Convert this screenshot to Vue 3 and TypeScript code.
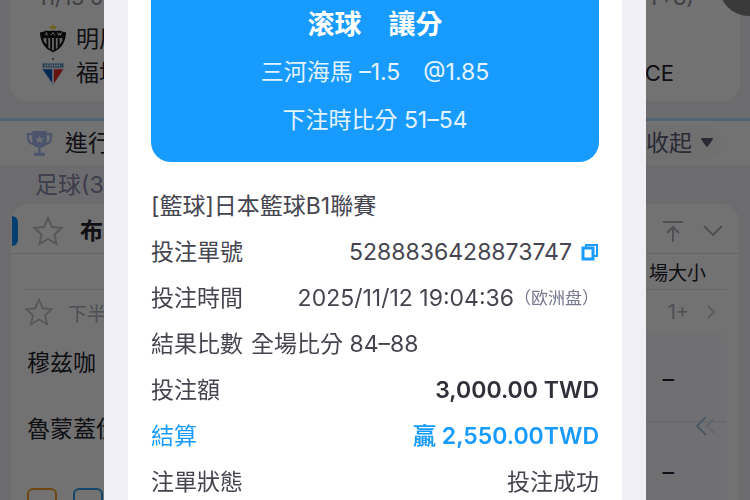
<script setup lang="ts">
interface Detail {
  label: string
  value: string
  note?: string
  kind?: 'amount' | 'win' | 'inline'
  copy?: boolean
}

const details: Detail[] = [
  { label: '投注單號', value: '5288836428873747', copy: true },
  { label: '投注時間', value: '2025/11/12 19:04:36', note: '（欧洲盘）' },
  { label: '結果比數', value: '全場比分 84–88', kind: 'inline' },
  { label: '投注額', value: '3,000.00 TWD', kind: 'amount' },
  { label: '結算', value: '贏 2,550.00TWD', kind: 'win' },
  { label: '注單狀態', value: '投注成功' },
]

const starPath = 'M16 3l4 9 9.500 1-7 6.500 2 9.500-8.500-5-8.500 5 2-9.500-7-6.500 9.500-1z'

function copyNumber(value: string) {
  navigator.clipboard?.writeText(value)
}
</script>

<template>
  <main class="page">
    <section class="match-card">
      <div class="date-row"><span>11/13 0</span><span>(GMT+8)</span></div>
      <div class="team-row">
        <svg class="crest" viewBox="0 0 32 32">
          <path d="M16 0l1 3 3-1-1 3h-6l-1-3 3 1z" fill="#f5d51e" />
          <path d="M2 9q5-1 7-2 3 1 7 0 4 1 7 0 2 1 7 2-1 16-14 21Q3 25 2 9z" fill="#161616" />
          <path d="M6 15v3l3 4v-7zm5 0v10l2 2V15zm4 0v13h2V15zm4 0v12l2-2V15zm4 0v7l3-4v-3z" fill="#ddd" />
          <path d="M8 12l1-3 1 3M14 12l2-3 2 3M21 9l1 3 1-2 1 2 1-3" fill="none" stroke="#eee" />
        </svg>
        <span>明尼</span>
      </div>
      <div class="team-row">
        <svg class="crest" viewBox="0 0 32 32">
          <circle cx="16" cy="1" r="1" fill="#444" />
          <path d="M4 5h24v7L16 30 4 12z" fill="#d9e6f2" />
          <path d="M5 6h22v4H5z" fill="#4a86b8" />
          <path d="M7 8h18" stroke="#fff" stroke-width="2" stroke-dasharray="1.500 1" />
          <path d="M5 12h10v14z" fill="#0758b8" />
          <path d="M17 12h10L17 27z" fill="#e32920" />
        </svg>
        <span>福塔</span>
        <span class="end club">CE</span>
      </div>
    </section>

    <header class="live-bar">
      <svg class="trophy" viewBox="0 0 26 26">
        <path d="M6 4H2v4q0 5 6 6M20 4h4v4q0 5-6 6" fill="none" stroke="#a9b8f0" stroke-width="2" />
        <path d="M6 1h14v9q0 7-7 7t-7-7z" fill="#a9b8f0" />
        <path d="M12 16h2v6h-2zM8 22h10v3H8z" fill="#a9b8f0" />
        <path d="M13 5l1 3h3l-2 2 1 3-3-2-3 2 1-3-2-2h3z" fill="#eef1ff" />
      </svg>
      <span>進行</span>
      <button class="collapse end" type="button">收起
        <svg class="caret" viewBox="0 0 14 12"><path d="M2 2h10L7 9z" fill="currentColor" stroke="currentColor" stroke-width="2" stroke-linejoin="round" /></svg>
      </button>
    </header>

    <h2 class="sport">足球(33)</h2>

    <section class="league">
      <div class="league-head">
        <i class="marker"></i>
        <button class="icon-button" type="button" aria-label="收藏"><svg class="star" viewBox="0 0 32 32"><path :d="starPath" /></svg></button>
        <b>布</b>
        <svg class="tool end" viewBox="0 0 24 24"><path d="M2 3h20M12 23V9M6 14l6-6 6 6" /></svg>
        <svg class="tool" viewBox="0 0 24 24"><path d="M3 7l9 9 9-9" /></svg>
      </div>
      <div class="league-body">
        <div class="market-row"><span class="end">場大小</span></div>
        <div class="period-row">
          <button class="icon-button" type="button" aria-label="收藏"><svg class="star small" viewBox="0 0 32 32"><path :d="starPath" /></svg></button>
          <span>下半</span>
          <span class="end count">1+</span>
          <svg class="next" viewBox="0 0 12 18"><path d="M3 3l6 6-6 6" /></svg>
        </div>
        <div class="odds">
          <div class="names">
            <span>穆兹咖</span>
            <span>魯蒙蓋伊</span>
            <div class="badges"><i class="badge orange"></i><i class="badge blue"></i></div>
          </div>
          <div class="prices">
            <span>–</span>
            <span>–</span>
            <svg class="back" viewBox="0 0 22 22"><path d="M11 2L2 11l9 9" /><path d="M19 4l-7 7 7 7" opacity=".4" /></svg>
          </div>
        </div>
      </div>
    </section>
    <i class="floating"></i>
  </main>

  <div class="backdrop">
    <section class="dialog" role="dialog">
      <article class="slip">
        <div class="summary">
          <h1>滚球　讓分</h1>
          <p>三河海馬 –1.5　@1.85</p>
          <p>下注時比分 51–54</p>
        </div>
        <h3>[籃球]日本籃球B1聯賽</h3>
        <dl>
          <div v-for="item in details" :key="item.label" class="detail" :class="item.kind">
            <dt>{{ item.label }}</dt>
            <dd>
              <span>{{ item.value }}</span>
              <small v-if="item.note">{{ item.note }}</small>
              <button v-if="item.copy" class="icon-button copy-button" type="button" aria-label="複製" @click="copyNumber(item.value)">
                <svg class="copy" viewBox="0 0 18 18"><path d="M5 4V2h11v11h-3" /><path d="M2 5h10v11H2z" stroke-width="3" /></svg>
              </button>
            </dd>
          </div>
        </dl>
      </article>
    </section>
  </div>
</template>

<style>
body {
  margin: 0;
  overflow: hidden;
}
</style>

<style scoped>
.page,
.backdrop {
  font-family: Inter, "Noto Sans CJK TC", sans-serif;
  font-size: 23px;
  box-sizing: border-box;
}
.page {
  position: relative;
  height: 100vh;
  overflow: hidden;
  background: #f0eff5;
  color: #24242e;
}
h1, h2, h3, p, dl, dd {
  margin: 0;
  font-weight: 400;
}
button {
  border: 0;
  padding: 0;
  background: none;
  font: inherit;
  color: inherit;
}
svg {
  display: block;
  fill: none;
  flex: none;
}
.end {
  margin-left: auto;
}
.icon-button {
  flex: none;
}
.match-card {
  margin: -20px 10px 17px;
  padding: 0 28px 11px;
  background: #fdfdfd;
  border-radius: 0 0 18px 18px;
}
.date-row {
  display: flex;
  justify-content: space-between;
  height: 36px;
  line-height: 36px;
  margin-bottom: 6px;
  padding-right: 18px;
  font-size: 21px;
  color: #8c8c99;
}
.team-row {
  display: flex;
  align-items: center;
  gap: 8px;
  height: 34px;
  line-height: 34px;
  padding-right: 38px;
}
.crest {
  width: 30px;
  height: 30px;
}
.club {
  font-size: 22px;
}
.live-bar {
  display: flex;
  align-items: center;
  gap: 12px;
  height: 44px;
  line-height: 44px;
  padding: 0 28px 0 26px;
  border-top: 3px solid #b6dcff;
  background: #fdfdfd;
}
.trophy {
  width: 27px;
  height: 27px;
}
.collapse {
  display: flex;
  align-items: center;
  gap: 8px;
  height: 36px;
  padding: 0 8px 0 20px;
  border-radius: 18px;
  background: #f8f8fa;
  color: #606078;
}
.caret {
  width: 14px;
  height: 12px;
}
.sport {
  height: 39px;
  line-height: 41px;
  padding-left: 35px;
  font-size: 23px;
  color: #8888a8;
}
.league {
  margin: 0 11px;
  border-radius: 18px 18px 0 0;
  background: #fdfdfd;
}
.league-head {
  display: flex;
  align-items: center;
  height: 44px;
  line-height: 44px;
  padding: 5px 14px 0 1px;
  border-bottom: 1px solid #e2e2e8;
}
.marker {
  width: 6px;
  height: 30px;
  margin-right: 14px;
  border-radius: 0 7px 7px 0;
  background: #0a8cf5;
}
.league-head b {
  margin-left: 16px;
}
.star {
  width: 32px;
  height: 32px;
  stroke: #c2c2ca;
  stroke-width: 2;
}
.star.small {
  width: 30px;
  height: 30px;
}
.tool {
  width: 24px;
  height: 24px;
  stroke: #b0b0bc;
  stroke-width: 2;
}
.tool + .tool {
  margin-left: 16px;
}
.league-body {
  padding: 0 12px;
}
.market-row,
.period-row {
  display: flex;
  align-items: center;
}
.market-row {
  height: 35px;
  padding-right: 21px;
  border-bottom: 1px solid #e2e2e8;
  font-size: 19px;
}
.period-row {
  height: 36px;
  padding: 4px 10px 0 1px;
  font-size: 19px;
  color: #b0b0bc;
}
.period-row .icon-button {
  margin-right: 14px;
}
.count {
  font-size: 20px;
}
.next {
  width: 12px;
  height: 18px;
  margin-left: 16px;
  stroke: #ccccd4;
  stroke-width: 2;
}
.odds {
  display: grid;
  grid-template-columns: 5fr 1fr;
}
.names {
  display: flex;
  flex-direction: column;
  padding-left: 4px;
}
.names span {
  height: 66px;
  line-height: 66px;
}
.badges {
  display: flex;
  gap: 16px;
  padding-top: 26px;
}
.badge {
  width: 26px;
  height: 24px;
  border: 2px solid;
  border-radius: 6px;
}
.orange {
  color: #f0a020;
}
.blue {
  color: #2e9cf0;
}
.prices {
  position: relative;
  border-radius: 0 12px 0 0;
  background: #f9f9fc;
}
.prices span {
  display: block;
  height: 91px;
  line-height: 98px;
  text-align: center;
}
.prices span + span {
  border-top: 2px solid #ececf0;
}
.back {
  position: absolute;
  top: 85px;
  right: 10px;
  width: 22px;
  height: 22px;
  stroke: #a8c4dc;
  stroke-width: 2;
}
.floating {
  position: absolute;
  top: -44px;
  right: -29px;
  width: 60px;
  height: 60px;
  border-radius: 50%;
  background: #808080;
}
.backdrop {
  position: fixed;
  inset: 0;
  display: flex;
  padding: 0 104px;
  background: rgba(0, 0, 0, 0.55);
}
.dialog {
  flex: 1;
  padding: 0 24px;
  background: #f0eff5;
}
.slip {
  min-height: 100%;
  box-sizing: border-box;
  padding: 0 23px;
  background: #fff;
  color: #454550;
}
.summary {
  padding-bottom: 18px;
  margin-bottom: 21px;
  border-radius: 0 0 20px 20px;
  background: #189bff;
  color: #fff;
  text-align: center;
}
.summary h1 {
  height: 48px;
  line-height: 50px;
  font-size: 27px;
  font-weight: 700;
}
.summary p {
  height: 48px;
  line-height: 48px;
  color: #e3f3ff;
}
h3,
.detail {
  height: 46px;
  line-height: 46px;
  font-size: 23px;
}
.detail {
  display: flex;
  justify-content: space-between;
}
.detail dd {
  display: flex;
  align-items: center;
}
.inline {
  justify-content: flex-start;
  gap: 8px;
}
.detail small {
  font-size: 17px;
  color: #77778f;
}
.amount dd {
  font-weight: 600;
  color: #30303a;
}
.win {
  color: #189bff;
}
.win dd {
  font-weight: 600;
}
.copy-button {
  margin-left: 9px;
}
.copy {
  width: 18px;
  height: 18px;
  stroke: #189bff;
  stroke-width: 2;
}
</style>
